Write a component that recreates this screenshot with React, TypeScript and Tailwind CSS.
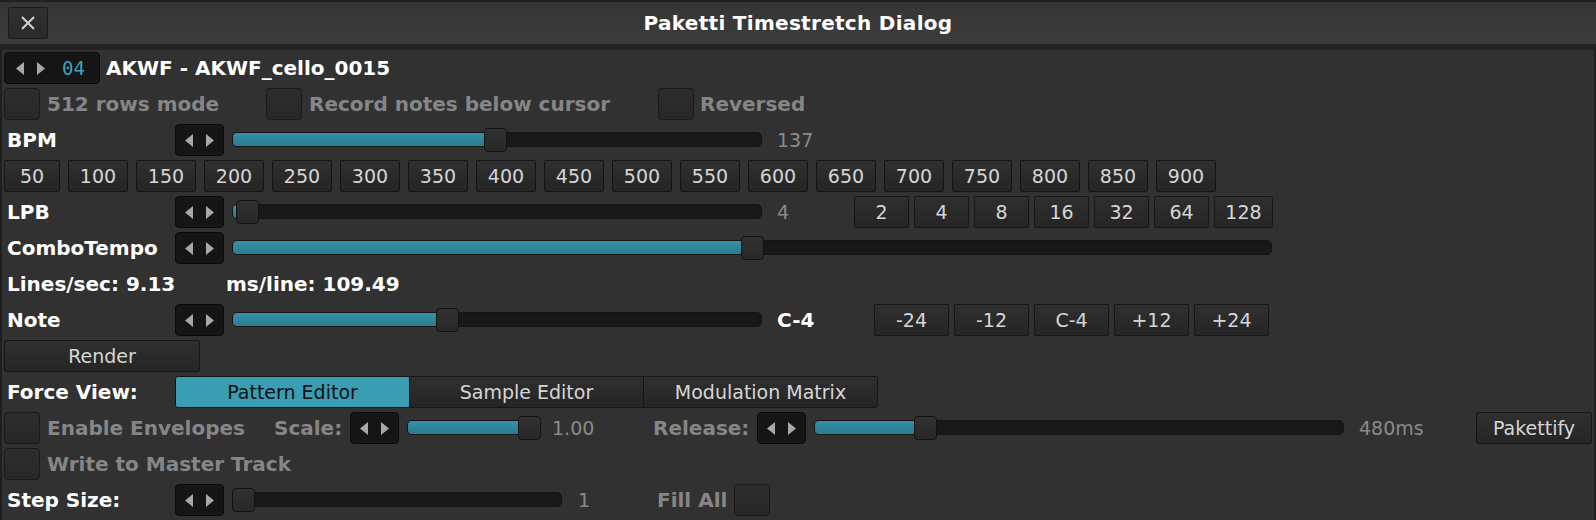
import React from 'react';

const Arrows: React.FC = () => (
  <svg width="29" height="13" viewBox="0 0 29 13">
    <polygon points="8,0 8,13 0,6.5" fill="#a8a8a8" />
    <polygon points="21,0 21,13 29,6.5" fill="#a8a8a8" />
  </svg>
);

const ValueBox: React.FC = () => (
  <div className="flex h-[32px] w-[49px] shrink-0 items-center justify-center rounded-[4px] border border-[#0b0b0b] bg-[#151515]">
    <Arrows />
  </div>
);

const CheckBox: React.FC<{ className?: string }> = ({ className = '' }) => (
  <div className={`h-[32px] w-[36px] shrink-0 rounded-[4px] border border-[#191919] bg-gradient-to-b from-[#2d2d2d] to-[#272727] ${className}`} />
);

const Btn: React.FC<{ className?: string; children: React.ReactNode }> = ({ className = '', children }) => (
  <div className={`flex h-[32px] shrink-0 items-center justify-center rounded-[2px] border border-[#161616] bg-gradient-to-b from-[#2f2f2f] to-[#252525] text-[19px] text-[#d6d6d6] ${className}`}>
    {children}
  </div>
);

// pos = thumb offset in px from the left of the track
const Slider: React.FC<{ className: string; pos: number }> = ({ className, pos }) => (
  <div className={`relative h-[32px] shrink-0 ${className}`}>
    <div className="absolute inset-x-0 top-[8px] h-[15px] overflow-hidden rounded-[5px] border border-[#141414] bg-[#181818]">
      <div className="h-full bg-gradient-to-b from-[#3791a4] to-[#2a7c8e]" style={{ width: pos + 6 }} />
    </div>
    <div
      className="absolute top-[4px] h-[24px] w-[23px] rounded-[4px] border border-[#121212] bg-gradient-to-b from-[#313131] to-[#282828]"
      style={{ left: pos }}
    />
  </div>
);

// white = section label, dim = label of a disabled-looking option
const Label: React.FC<{ className?: string; dim?: boolean; children: React.ReactNode }> = ({ className = '', dim, children }) => (
  <div className={`shrink-0 whitespace-nowrap text-[20px] font-bold ${dim ? 'text-[#868686]' : 'text-white'} ${className}`}>{children}</div>
);

const bpmValues = ['50', '100', '150', '200', '250', '300', '350', '400', '450', '500', '550', '600', '650', '700', '750', '800', '850', '900'];
const lpbValues = ['2', '4', '8', '16', '32', '64', '128'];
const noteValues = ['-24', '-12', 'C-4', '+12', '+24'];

const App: React.FC = () => {
  return (
    <div className="h-[520px] w-[1596px] overflow-hidden bg-[#1f1f1f] font-['DejaVu_Sans',sans-serif] leading-none">
      {/* title bar */}
      <div className="mt-[2px] grid h-[42px] grid-cols-[1fr_auto_1fr] items-center bg-gradient-to-b from-[#353535] to-[#3c3c3c]">
        <div className="ml-2 flex h-[32px] w-[40px] items-center justify-center rounded-[2px] border border-[#1b1b1b] bg-gradient-to-b from-[#303030] to-[#2a2a2a]">
          <svg width="16" height="16" viewBox="0 0 16 16">
            <path d="M2 2 L14 14 M14 2 L2 14" stroke="#d0d0d0" strokeWidth="2" />
          </svg>
        </div>
        <div className="whitespace-nowrap text-[20px] font-bold tracking-[0.3px] text-white">Paketti Timestretch Dialog</div>
        <div />
      </div>
      <div className="h-[6px] bg-[#232323]" />

      {/* content */}
      <div className="mx-[2px] flex h-[476px] flex-col gap-[4px] bg-[#313131] px-[2px] pt-[2px]">
        {/* instrument */}
        <div className="flex h-[32px] items-center">
          <div className="flex h-[32px] w-[96px] items-center rounded-[4px] border border-[#0b0b0b] bg-[#151515] pl-[11px]">
            <Arrows />
            <span className="ml-[17px] font-['DejaVu_Sans_Mono',monospace] text-[19px] text-[#3aa3c2]">04</span>
          </div>
          <Label className="ml-[6px]">AKWF - AKWF_cello_0015</Label>
        </div>

        {/* toggles */}
        <div className="flex h-[32px] items-center">
          <CheckBox />
          <Label dim className="ml-[7px] w-[219px]">512 rows mode</Label>
          <CheckBox />
          <Label dim className="ml-[7px] w-[349px]">Record notes below cursor</Label>
          <CheckBox />
          <Label dim className="ml-[6px]">Reversed</Label>
        </div>

        {/* BPM */}
        <div className="flex h-[32px] items-center">
          <Label className="w-[171px] pl-[3px]">BPM</Label>
          <ValueBox />
          <Slider className="ml-2 w-[530px]" pos={252} />
          <span className="ml-[15px] text-[19px] text-[#8a8a8a]">137</span>
        </div>

        <div className="flex h-[32px] items-center gap-[8px]">
          {bpmValues.map((v, i) => (
            <Btn key={v} className={i === 0 ? 'w-[56px]' : 'w-[60px]'}>{v}</Btn>
          ))}
        </div>

        {/* LPB */}
        <div className="flex h-[32px] items-center">
          <Label className="w-[171px] pl-[3px]">LPB</Label>
          <ValueBox />
          <Slider className="ml-2 w-[530px]" pos={4} />
          <span className="ml-[15px] w-[77px] text-[19px] text-[#8a8a8a]">4</span>
          <div className="flex gap-[5px]">
            {lpbValues.map((v, i) => (
              <Btn key={v} className={i === lpbValues.length - 1 ? 'w-[59px]' : 'w-[55px]'}>{v}</Btn>
            ))}
          </div>
        </div>

        {/* ComboTempo */}
        <div className="flex h-[32px] items-center">
          <Label className="w-[171px] pl-[3px]">ComboTempo</Label>
          <ValueBox />
          <Slider className="ml-2 w-[1040px]" pos={509} />
        </div>

        {/* timing info */}
        <div className="flex h-[32px] items-center">
          <Label className="w-[222px] pl-[3px]">Lines/sec: 9.13</Label>
          <Label>ms/line: 109.49</Label>
        </div>

        {/* Note */}
        <div className="flex h-[32px] items-center">
          <Label className="w-[171px] pl-[3px]">Note</Label>
          <ValueBox />
          <Slider className="ml-2 w-[530px]" pos={204} />
          <Label className="ml-[15px] w-[97px]">C-4</Label>
          <div className="flex gap-[5px]">
            {noteValues.map((v) => (
              <Btn key={v} className="w-[75px]">{v}</Btn>
            ))}
          </div>
        </div>

        <div className="flex h-[32px] items-center">
          <Btn className="w-[196px]">Render</Btn>
        </div>

        {/* Force View */}
        <div className="flex h-[32px] items-center">
          <Label className="w-[171px] pl-[3px]">Force View:</Label>
          <div className="flex h-[32px] overflow-hidden rounded-[3px] border border-[#161616]">
            <div className="flex w-[233px] items-center justify-center bg-[#3a9db2] text-[19px] text-[#111]">Pattern Editor</div>
            <div className="flex w-[234px] items-center justify-center border-l border-[#161616] bg-gradient-to-b from-[#2f2f2f] to-[#252525] text-[19px] text-[#d6d6d6]">Sample Editor</div>
            <div className="flex w-[234px] items-center justify-center border-l border-[#161616] bg-gradient-to-b from-[#2f2f2f] to-[#252525] text-[19px] text-[#d6d6d6]">Modulation Matrix</div>
          </div>
        </div>

        {/* Envelopes */}
        <div className="flex h-[32px] items-center">
          <CheckBox />
          <Label dim className="ml-[7px] w-[227px]">Enable Envelopes</Label>
          <Label dim className="w-[76px]">Scale:</Label>
          <ValueBox />
          <Slider className="ml-2 w-[134px]" pos={111} />
          <span className="ml-[11px] w-[101px] text-[19px] text-[#8a8a8a]">1.00</span>
          <Label dim className="w-[104px]">Release:</Label>
          <ValueBox />
          <Slider className="ml-2 w-[530px]" pos={100} />
          <span className="ml-[15px] w-[117px] text-[19px] text-[#8a8a8a]">480ms</span>
          <Btn className="w-[116px]">Pakettify</Btn>
        </div>

        <div className="flex h-[32px] items-center">
          <CheckBox />
          <Label dim className="ml-[7px]">Write to Master Track</Label>
        </div>

        {/* Step Size */}
        <div className="flex h-[32px] items-center">
          <Label className="w-[171px] pl-[3px]">Step Size:</Label>
          <ValueBox />
          <Slider className="ml-2 w-[330px]" pos={0} />
          <span className="ml-4 w-[79px] text-[19px] text-[#8a8a8a]">1</span>
          <Label dim className="w-[77px]">Fill All</Label>
          <CheckBox />
        </div>
      </div>
    </div>
  );
};

export default App;
